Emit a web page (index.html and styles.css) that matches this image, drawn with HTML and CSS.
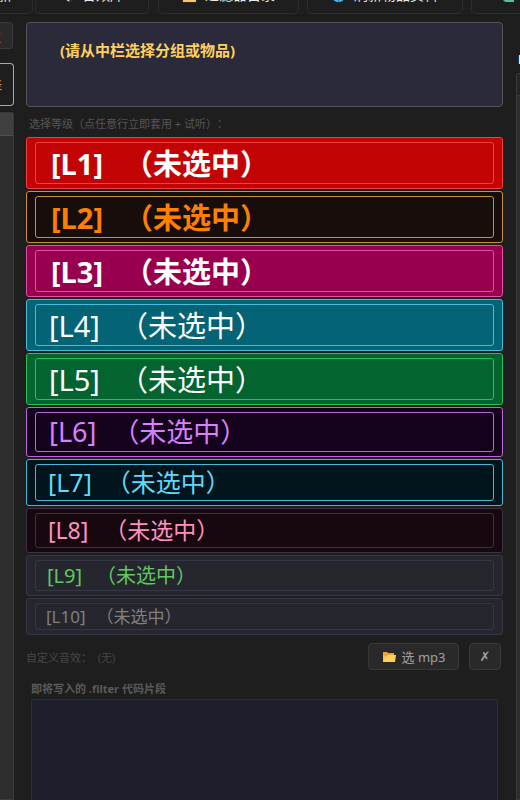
FILE: index.html
```html
<!DOCTYPE html>
<html lang="zh-CN">
<head>
  <meta charset="utf-8">
  <meta name="viewport" content="width=device-width, initial-scale=1">
  <title>filter 编辑器</title>
  <link rel="stylesheet" href="styles.css">
</head>
<body>
  <!-- toolbar -->
  <div class="toolbar">
    <button class="tool tool-first">更新</button>
    <button class="tool tool-sound">
      <svg class="icon" viewBox="0 0 16 16"><path d="M1 5h4l6-4v14l-6-4H1z" fill="#c9ced8"/><path d="M12 4q4 4 0 9" fill="none" stroke="#3f7fd0" stroke-width="2"/></svg>
      音效库
    </button>
    <button class="tool tool-dir">
      <svg class="icon" viewBox="0 0 16 16"><path d="M1 2h5l2 2h6v11H1z" fill="#f5a623"/><path d="M1 6h14v9H1z" fill="#ffc45c"/></svg>
      过滤器目录
    </button>
    <button class="tool tool-refresh">
      <svg class="icon" viewBox="0 0 16 16"><circle cx="8" cy="8" r="7" fill="#45b8f0"/><path d="M2 11h12M8 1v14" stroke="#2582c4" fill="none"/></svg>
      刷新物品资料
    </button>
    <button class="tool tool-last">
      <svg class="icon" viewBox="0 0 16 16"><path d="M1 3h14v12H6q-5-3-5-7z" fill="#4fc3a1"/></svg>
    </button>
  </div>

  <div class="columns">
    <div class="left">
      <button class="left-btn">置</button>
      <button class="left-group">择</button>
      <div class="left-list"><div class="list-head"></div></div>
    </div>

    <div class="main">
      <div class="preview">(请从中栏选择分组或物品)</div>
      <div class="hint">选择等级（点任意行立即套用 + 试听）：</div>

      <div class="levels">
        <button class="level l1"><span class="inner"><span>[L1]</span><span>（未选中）</span></span></button>
        <button class="level l2"><span class="inner"><span>[L2]</span><span>（未选中）</span></span></button>
        <button class="level l3"><span class="inner"><span>[L3]</span><span>（未选中）</span></span></button>
        <button class="level l4"><span class="inner"><span>[L4]</span><span>（未选中）</span></span></button>
        <button class="level l5"><span class="inner"><span>[L5]</span><span>（未选中）</span></span></button>
        <button class="level l6"><span class="inner"><span>[L6]</span><span>（未选中）</span></span></button>
        <button class="level l7"><span class="inner"><span>[L7]</span><span>（未选中）</span></span></button>
        <button class="level l8"><span class="inner"><span>[L8]</span><span>（未选中）</span></span></button>
        <button class="level l9"><span class="inner"><span>[L9]</span><span>（未选中）</span></span></button>
        <button class="level l10"><span class="inner"><span>[L10]</span><span>（未选中）</span></span></button>
      </div>

      <div class="sound">
        <span class="sound-name">自定义音效：  (无)</span>
        <button class="btn btn-pick">
          <svg class="folder" viewBox="0 0 14 12"><path d="M1 1h4l1 1h6v4H1z" fill="#f0a42c"/><path d="M1 3v8h11V5H3z" fill="#ffb94a"/><path d="M3 6l2-1 1-1h8l-1 7H1z" fill="#ffcf5c"/></svg>
          选 mp3
        </button>
        <button class="btn btn-clear">✗</button>
      </div>

      <div class="code">
        <label for="snippet">即将写入的 .filter 代码片段</label>
        <textarea id="snippet" readonly></textarea>
      </div>
    </div>

    <div class="right">
      <div class="right-title">D</div>
      <div class="right-list"><div class="right-head"></div></div>
    </div>
  </div>
</body>
</html>
```

FILE: styles.css
```css
:root {
  --bg: #1e1e1e;
  --font: "Noto Sans", "Noto Sans CJK SC", sans-serif;
}
* {
  box-sizing: border-box;
}
body {
  margin: 0;
  height: 100vh;
  overflow: hidden;
  display: flex;
  flex-direction: column;
  background: var(--bg);
  font-family: var(--font);
  text-spacing-trim: space-all;
}
button {
  font-family: var(--font);
  margin: 0;
}

/* toolbar, scrolled so that only the lower edge shows */
.toolbar {
  flex: none;
  display: flex;
  align-items: flex-end;
  height: 16px;
  padding-bottom: 1px;
  overflow: hidden;
  border-bottom: 1px solid #1a1a1a;
}
.tool {
  flex: none;
  display: flex;
  align-items: center;
  gap: 8px;
  height: 34px;
  padding: 0 20px 4px 23px;
  background: var(--bg);
  border: 1px solid #2c2c2c;
  border-radius: 5px;
  color: #e8e8e8;
  font-size: 14px;
  line-height: 20px;
  white-space: nowrap;
}
.tool-first {
  width: 33px;
  padding-left: 0;
  justify-content: flex-end;
  overflow: hidden;
  border-left: 0;
  border-radius: 0 5px 5px 0;
  margin-right: 2px;
}
.tool-sound {
  width: 114px;
  margin-right: 9px;
}
.tool-dir {
  width: 141px;
  margin-right: 8px;
}
.tool-refresh {
  width: 156px;
  margin-right: 8px;
}
.tool-last {
  width: 140px;
  padding-left: 28px;
}
.icon {
  flex: none;
  width: 15px;
  height: 15px;
}

.columns {
  flex: 1;
  min-height: 0;
  display: grid;
  grid-template-columns: 14px 1fr 4px;
}

/* left column */
.left {
  display: flex;
  flex-direction: column;
  padding-top: 6px;
  min-width: 0;
}
.left-btn,
.left-group {
  display: flex;
  justify-content: flex-end;
  align-items: center;
  overflow: hidden;
  padding: 0 11px 0 0;
  font-size: 13px;
}
.left-btn {
  height: 27px;
  width: 13px;
  background: #2a2a2a;
  border: 1px solid #3a3a3a;
  border-left: 0;
  border-radius: 0 4px 4px 0;
  color: #dddddd;
}
.left-group {
  height: 43px;
  margin-top: 14px;
  background: var(--bg);
  border: 1px solid #aaaaaa;
  border-left: 0;
  border-radius: 0 4px 4px 0;
  color: #c9a060;
}
.left-list {
  flex: 1;
  margin-top: 6px;
  background: #2d2d2d;
  border: 1px solid #3a3a3a;
  border-left: 0;
  border-radius: 0 3px 0 0;
}
.list-head {
  height: 23px;
  background: #404040;
  border-bottom: 1px solid #505050;
}

/* middle column */
.main {
  display: flex;
  flex-direction: column;
  min-width: 0;
  padding: 6px 13px 0 12px;
}
.preview {
  flex: none;
  height: 85px;
  padding: 16px 33px;
  background: #2b2a3a;
  border: 1px solid #555555;
  border-radius: 4px;
  color: #ffd060;
  font-size: 15px;
  font-weight: bold;
  line-height: 22px;
}
.hint {
  padding: 9px 3px 5px;
  color: #555555;
  font-size: 11px;
  line-height: 16px;
}
.levels {
  display: flex;
  flex-direction: column;
  gap: 2px;
}
.level {
  display: block;
  width: 100%;
  padding: 4px 8px;
  border: 1px solid;
  border-radius: 3px;
  text-align: left;
}
.inner {
  display: flex;
  gap: 14px;
  padding: 0 12px;
  border: 1px solid;
  border-color: inherit;
  border-radius: 3px;
  white-space: nowrap;
}
.l1, .l2, .l3, .l4, .l5 {
  font-size: 29px;
  line-height: 38px;
}
.l1, .l2, .l3 {
  font-weight: bold;
}
.l1 .inner, .l2 .inner, .l3 .inner {
  gap: 21px;
  padding: 2px 15px 0;
}
.l4 .inner, .l5 .inner {
  gap: 19px;
  padding: 2px 13px 0;
}
.l1 {
  background: #c30404;
  border-color: #f04040;
  color: #ffffff;
}
.l2 {
  background: #170e0b;
  border-color: #c89040;
  color: #ff8000;
}
.l3 {
  background: #98004f;
  border-color: #e050a8;
  color: #ffffff;
}
.l4 {
  background: #046475;
  border-color: #48bcd8;
  color: #ffffff;
}
.l5 {
  background: #04642f;
  border-color: #28c058;
  color: #ffffff;
}
.l6 {
  background: #15031d;
  border-color: #b868d8;
  color: #d880ff;
  font-size: 27px;
  line-height: 38px;
}
.l6 .inner {
  gap: 16px;
  padding: 0 13px;
}
.l7 {
  background: #03151c;
  border-color: #48b8d8;
  color: #60d8ff;
  font-size: 25px;
  line-height: 35px;
}
.l8 {
  background: #17080f;
  border-color: #383344;
  color: #ff90c0;
  font-size: 23px;
  line-height: 33px;
}
.l8 .inner {
  gap: 16px;
}
.l9 {
  background: #26262f;
  border-color: #363646;
  color: #60c860;
  font-size: 20px;
  line-height: 29px;
}
.l9 .inner {
  padding: 0 11px;
}
.l10 {
  background: #26262f;
  border-color: #363646;
  color: #808080;
  font-size: 17px;
  line-height: 25px;
}
.l10 .inner {
  gap: 11px;
  padding: 0 10px;
}

.sound {
  display: flex;
  align-items: center;
  padding: 8px 2px 0 0;
}
.sound-name {
  flex: 1;
  color: #464646;
  font-size: 11px;
  white-space: pre;
}
.btn {
  display: flex;
  align-items: center;
  justify-content: center;
  gap: 6px;
  height: 27px;
  background: #292929;
  border: 1px solid #383838;
  border-radius: 4px;
  color: #a0a0a0;
  font-size: 13px;
}
.btn-pick {
  width: 91px;
  margin-right: 10px;
  padding: 0;
}
.btn-clear {
  width: 32px;
  padding: 0;
  font-family: "DejaVu Sans", sans-serif;
}
.folder {
  width: 14px;
  height: 12px;
}

.code {
  flex: 1;
  min-height: 0;
  display: flex;
  flex-direction: column;
  padding: 11px 5px 0;
}
.code label {
  color: #5a5a5a;
  font-size: 11px;
  font-weight: bold;
  line-height: 16px;
}
.code textarea {
  flex: 1;
  margin-top: 2px;
  padding: 6px;
  resize: none;
  outline: none;
  background: #1f1e2d;
  border: 1px solid #2e2c42;
  border-bottom: 0;
  border-radius: 3px 3px 0 0;
  color: #c0c0c0;
  font-family: "Liberation Mono", monospace;
  font-size: 12px;
}

/* right column, only its left edge is in view */
.right {
  display: flex;
  flex-direction: column;
  min-width: 0;
  overflow: hidden;
}
.right-title {
  padding: 34px 0 5px 2px;
  color: #ffffff;
  font-size: 13px;
  font-weight: bold;
  line-height: 18px;
}
.right-list {
  flex: 1;
  background: #2d2d2d;
  border: 1px solid #3a3a3a;
  border-right: 0;
  border-radius: 3px 0 0 0;
}
.right-head {
  height: 22px;
  background: #262626;
  border-bottom: 1px solid #3a3a3a;
}
```
